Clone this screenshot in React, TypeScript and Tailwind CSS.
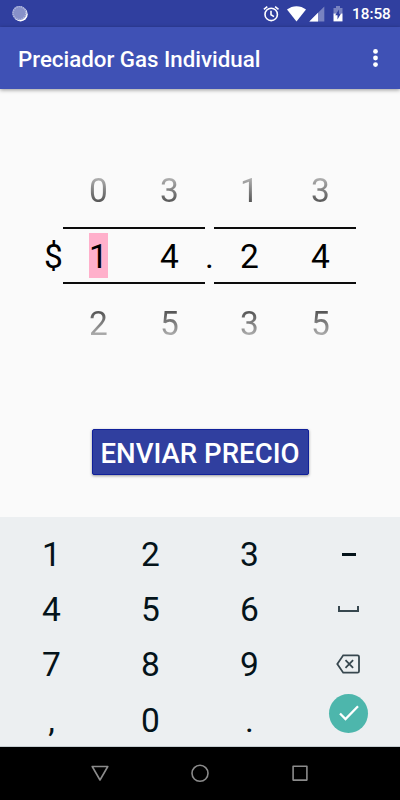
import { useState } from "react";
import type { ReactNode } from "react";

interface WheelProps {
  value: number;
  selected?: boolean;
}

function Wheel({ value, selected }: WheelProps) {
  const prev = (value + 9) % 10;
  const next = (value + 1) % 10;

  return (
    <div className="flex w-[71px] flex-col items-center text-[33.5px] leading-[45px]">
      <span className="bg-gradient-to-b from-[#b4b4b4] from-20% to-[#505050] to-80% bg-clip-text text-transparent">
        {prev}
      </span>
      <div className="mt-[14px] mb-[17px] flex h-[57px] w-full items-center justify-center border-y-2 border-[#0b0b0b] leading-[47px]">
        <span className={selected ? "h-[45px] bg-[#ffb0cb]" : "h-[45px]"}>
          {value}
        </span>
      </div>
      <span className="bg-gradient-to-b from-[#505050] from-20% to-[#b4b4b4] to-80% bg-clip-text text-transparent">
        {next}
      </span>
    </div>
  );
}

function StatusBar() {
  return (
    <div className="flex h-[27px] items-center bg-[#303f9f] text-white">
      <svg className="ml-3 h-4 w-4" viewBox="0 0 16 16" fill="none">
        <circle cx="8.5" cy="8.2" r="7.2" fill="#fff" />
        <circle cx="7.4" cy="7" r="7.2" fill="#8791c9" />
        <circle
          cx="7.4"
          cy="7"
          r="6.4"
          stroke="#b4bbe0"
          strokeWidth="1.4"
          strokeDasharray="1.2 1"
        />
      </svg>
      <svg
        className="ml-[235px] h-4 w-4"
        viewBox="0 0 16 16"
        fill="none"
        stroke="currentColor"
        strokeWidth="1.6"
      >
        <circle cx="8.2" cy="8.4" r="6.2" />
        <path d="M8 4.8v4l3 1.8M.9 3.4 4.3.6M15.5 3.4 12.1.6" />
      </svg>
      <svg className="ml-2 h-4 w-5" viewBox="0 0 20 16" fill="currentColor">
        <path d="M0 3.6C2.8 1.4 6.2.2 9.5.2s6.8 1.2 9.500 3.4L9.500 15.4z" />
      </svg>
      <svg className="ml-[2px] h-4 w-4" viewBox="0 0 16 16" fill="currentColor">
        <path d="M15.3.4v15H.3z" fillOpacity=".35" />
        <path d="M9 6.7v8.7H.3z" />
      </svg>
      <svg className="ml-[8px] h-4 w-[10px]" viewBox="0 0 10 16">
        <path d="M3 0h4v2h2.5v6H.5V2H3z" fill="#fff" fillOpacity=".35" />
        <path d="M.5 7.6h9v7.8h-9z" fill="#fff" />
        <path d="M6 3.6 2.2 9.3h2.300v4.2l3.500-6H6z" fill="#303f9f" />
      </svg>
      <span className="ml-[9px] pt-[2px] text-[15.3px] font-medium leading-none">
        18:58
      </span>
    </div>
  );
}

function AppBar() {
  return (
    <header className="flex h-[62px] items-center justify-between bg-[#3f51b5] pr-[22px] pl-[18px] text-white shadow-[0_1px_4px_rgba(0,0,0,0.4)]">
      <h1 className="pt-[3px] text-[22.3px] font-medium">
        Preciador Gas Individual
      </h1>
      <button className="pt-[2px]" aria-label="Más opciones">
        <svg className="h-5 w-[5px]" viewBox="0 0 5 20" fill="currentColor">
          <circle cx="2.5" cy="2.4" r="2.4" />
          <circle cx="2.5" cy="9" r="2.4" />
          <circle cx="2.5" cy="15.6" r="2.4" />
        </svg>
      </button>
    </header>
  );
}

interface KeyProps {
  label: string;
  onPress?: () => void;
  children?: ReactNode;
}

function Key({ label, onPress, children }: KeyProps) {
  return (
    <button
      aria-label={label}
      onClick={onPress}
      className="flex items-center justify-center text-[33.5px] leading-none text-[#04131a]"
    >
      {children ?? label}
    </button>
  );
}

export default function App() {
  const [digits, setDigits] = useState([1, 4, 2, 4]);
  const [active, setActive] = useState(0);

  const press = (n: number) => {
    setDigits(digits.map((d, i) => (i === active ? n : d)));
    setActive((active + 1) % 4);
  };

  const digitKey = (n: number) => (
    <Key label={String(n)} onPress={() => press(n)} />
  );

  return (
    <div className="flex h-[800px] w-[400px] flex-col overflow-hidden bg-[#fafafa] font-[Roboto,sans-serif]">
      <StatusBar />
      <AppBar />

      <main className="flex flex-1 flex-col items-center pt-[79px]">
        <div className="flex w-full items-center pl-[44px] text-[33.5px] leading-[44px] text-black">
          <span className="w-[19px]">$</span>
          <div className="flex">
            <Wheel value={digits[0]} selected={active === 0} />
            <Wheel value={digits[1]} selected={active === 1} />
          </div>
          <span className="flex w-[9px] justify-center">.</span>
          <div className="flex">
            <Wheel value={digits[2]} selected={active === 2} />
            <Wheel value={digits[3]} selected={active === 3} />
          </div>
        </div>

        <button className="mt-[83px] h-[46px] w-[217px] rounded-[2px] border border-[#10209a] bg-[#303f9f] pt-[4px] text-[27.6px] font-medium leading-none whitespace-nowrap text-white shadow-[0_1px_3px_rgba(0,0,0,0.4)]">
          ENVIAR PRECIO
        </button>
      </main>

      <div className="grid h-[230px] grid-cols-[repeat(4,99px)] grid-rows-[55px_55px_55px_57px] border-b border-[#c5cdd1] bg-[#eceff1] pt-[10px] pl-[2px]">
        {digitKey(1)}
        {digitKey(2)}
        {digitKey(3)}
        <Key label="−">
          <span className="mb-px h-[3px] w-[14px] bg-[#04131a]" />
        </Key>
        {digitKey(4)}
        {digitKey(5)}
        {digitKey(6)}
        <Key label="Espacio">
          <span className="mb-[2px] h-[6px] w-[21px] border-x-2 border-b-2 border-[#37474f]" />
        </Key>
        {digitKey(7)}
        {digitKey(8)}
        {digitKey(9)}
        <Key label="Borrar">
          <svg
            className="mr-[2px] mb-px h-5 w-6"
            viewBox="0 0 24 20"
            fill="none"
            stroke="#37474f"
            strokeWidth="1.8"
          >
            <path d="M7.2 1.3h14.3a1.5 1.5 0 0 1 1.5 1.5v14.4a1.5 1.5 0 0 1-1.5 1.500H7.2L1.3 10z" />
            <path d="m9.5 6.2 7.6 7.6m0-7.6-7.6 7.6" />
          </svg>
        </Key>
        <Key label="," />
        {digitKey(0)}
        <Key label="." />
        <Key label="Aceptar">
          <span className="mb-[15px] flex h-[39px] w-[39px] items-center justify-center rounded-full bg-[#4db6ac]">
            <svg
              className="h-4 w-5"
              viewBox="0 0 20 16"
              fill="none"
              stroke="#fff"
              strokeWidth="2.3"
            >
              <path d="m1 8.5 5.5 5.5L19 1.3" />
            </svg>
          </span>
        </Key>
      </div>

      <nav className="flex h-[53px] items-center justify-center gap-[80px] bg-black pb-px">
        <svg className="h-5 w-5" viewBox="0 0 20 20" fill="none" stroke="#8b8b8b" strokeWidth="1.6" strokeLinejoin="round">
          <path d="M2.2 3.5h15.6L10 17z" />
        </svg>
        <svg className="h-5 w-5" viewBox="0 0 20 20" fill="none" stroke="#8b8b8b" strokeWidth="1.6">
          <circle cx="10" cy="10.3" r="8" />
        </svg>
        <svg className="h-5 w-5" viewBox="0 0 20 20" fill="none" stroke="#8b8b8b" strokeWidth="1.6" strokeLinejoin="round">
          <path d="M3.1 3.3h13.8v13.8H3.1z" />
        </svg>
      </nav>
    </div>
  );
}
